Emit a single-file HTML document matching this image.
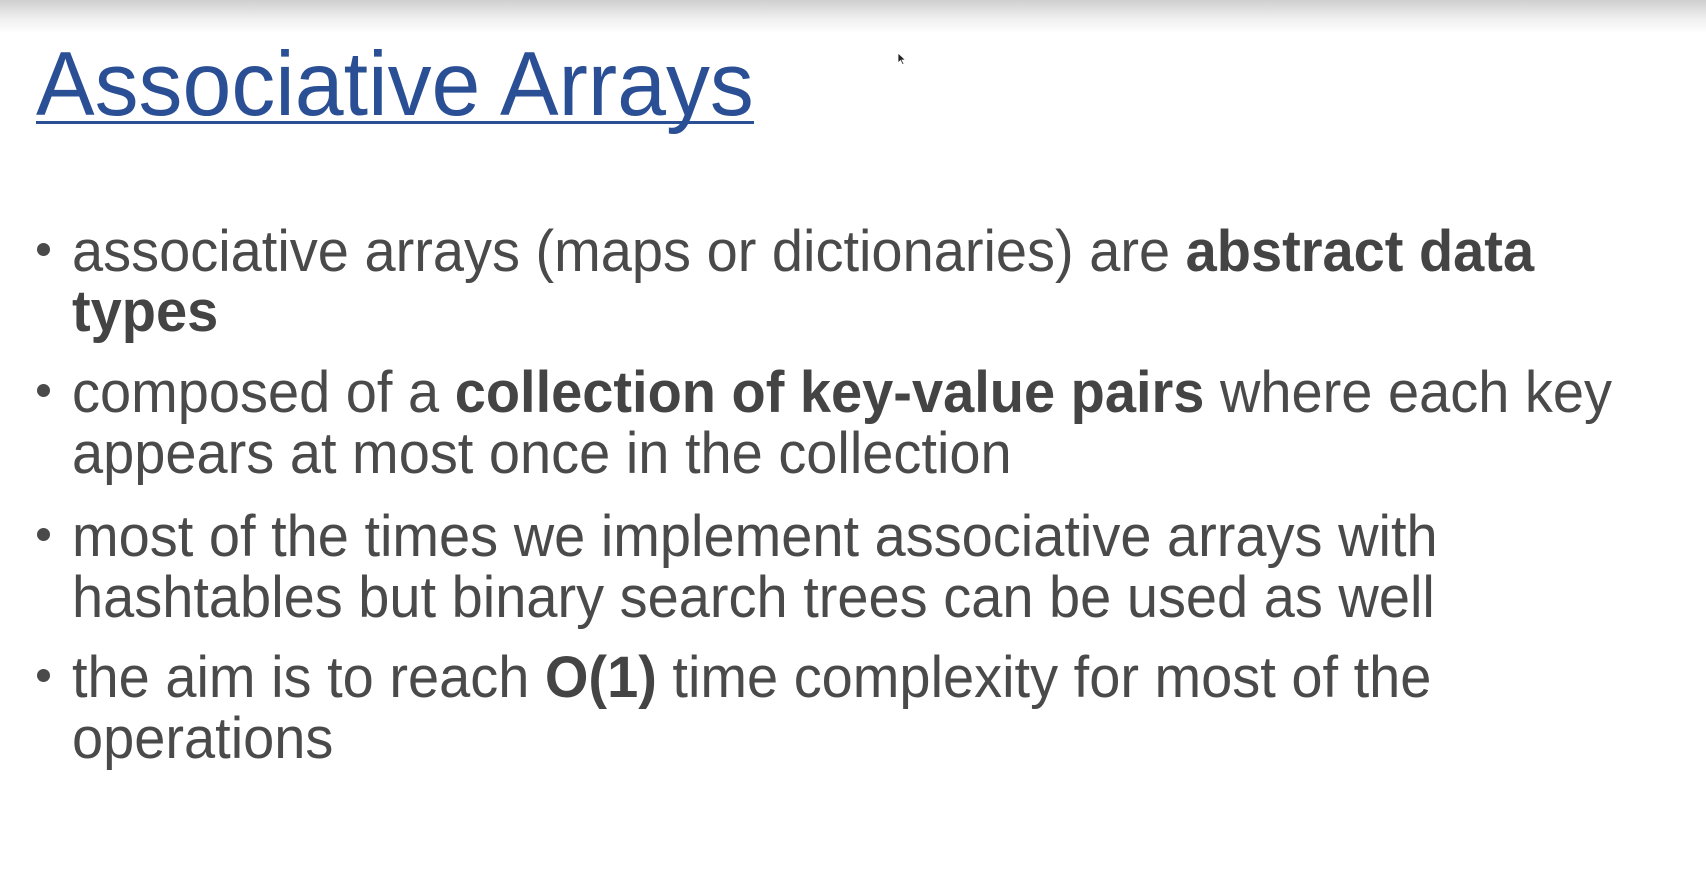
<!DOCTYPE html>
<html><head><meta charset="utf-8"><style>
html,body{margin:0;padding:0}
body{width:1706px;height:875px;overflow:hidden;background:#fff;position:relative;font-family:"Liberation Sans",Arial,sans-serif;}
.top{position:absolute;left:0;top:0;width:1706px;height:34px;background:linear-gradient(#cfcfcf,#f2f2f2 60%,#fff)}
.t{position:absolute;left:36px;top:36px;font-size:87px;line-height:100px;color:#2b4f94;white-space:nowrap;transform:scale(1.01,1.04);transform-origin:0 80px}
.ul{position:absolute;left:36px;top:121px;width:718px;height:3px;background:#2b4f94}
.l{position:absolute;left:72px;font-size:57px;line-height:62px;color:#4a4a4a;white-space:nowrap;transform-origin:0 0;transform:scale(0.982,1.02)}
.b{position:absolute;left:37px;width:13px;height:13px;border-radius:50%;background:#4a4a4a}
strong{font-weight:bold;color:#444}
</style></head><body>
<div class="top"></div>
<div class="t">Associative Arrays</div>
<div class="ul"></div>
<svg style="position:absolute;left:897px;top:52px" width="10" height="14"><path d="M1 1 L1 11 L3.5 8.5 L5.5 12.5 L7 12 L5 8 L8.5 8 Z" fill="#222" stroke="#fff" stroke-width="0.8"/></svg>

<div class="b" style="top:243px"></div>
<div class="l" style="top:220px">associative arrays (maps or dictionaries) are <strong>abstract data</strong></div>
<div class="l" style="top:280px"><strong>types</strong></div>

<div class="b" style="top:384px"></div>
<div class="l" style="top:361px">composed of a <strong>collection of key-value pairs</strong> where each key</div>
<div class="l" style="top:422px">appears at most once in the collection</div>

<div class="b" style="top:528px"></div>
<div class="l" style="top:505px">most of the times we implement associative arrays with</div>
<div class="l" style="top:566px">hashtables but binary search trees can be used as well</div>

<div class="b" style="top:669px"></div>
<div class="l" style="top:646px">the aim is to reach <strong>O(1)</strong> time complexity for most of the</div>
<div class="l" style="top:707px">operations</div>
</body></html>
